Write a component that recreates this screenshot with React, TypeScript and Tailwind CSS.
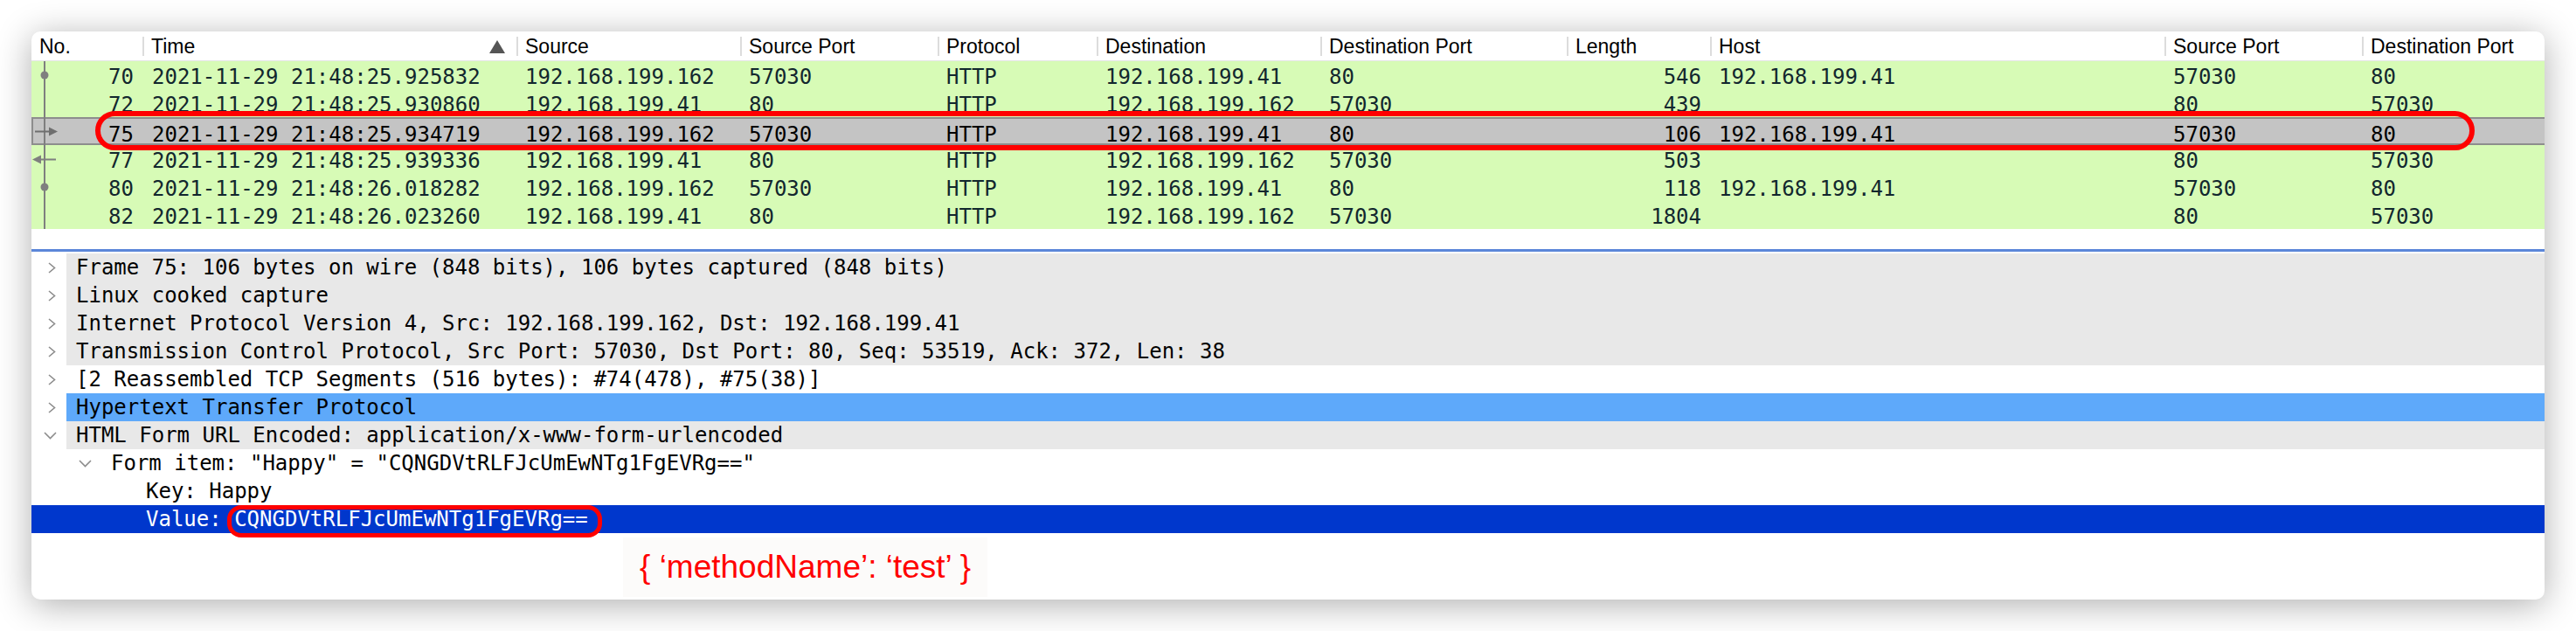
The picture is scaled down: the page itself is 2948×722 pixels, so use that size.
import React from "react";

type Row = {
  no: string;
  time: string;
  src: string;
  sport: string;
  dst: string;
  dport: string;
  len: string;
  host: string;
  sport2: string;
  dport2: string;
  sel?: boolean;
};

const rows: Row[] = [
  { no: "70", time: "2021-11-29 21:48:25.925832", src: "192.168.199.162", sport: "57030", dst: "192.168.199.41", dport: "80", len: "546", host: "192.168.199.41", sport2: "57030", dport2: "80" },
  { no: "72", time: "2021-11-29 21:48:25.930860", src: "192.168.199.41", sport: "80", dst: "192.168.199.162", dport: "57030", len: "439", host: "", sport2: "80", dport2: "57030" },
  { no: "75", time: "2021-11-29 21:48:25.934719", src: "192.168.199.162", sport: "57030", dst: "192.168.199.41", dport: "80", len: "106", host: "192.168.199.41", sport2: "57030", dport2: "80", sel: true },
  { no: "77", time: "2021-11-29 21:48:25.939336", src: "192.168.199.41", sport: "80", dst: "192.168.199.162", dport: "57030", len: "503", host: "", sport2: "80", dport2: "57030" },
  { no: "80", time: "2021-11-29 21:48:26.018282", src: "192.168.199.162", sport: "57030", dst: "192.168.199.41", dport: "80", len: "118", host: "192.168.199.41", sport2: "57030", dport2: "80" },
  { no: "82", time: "2021-11-29 21:48:26.023260", src: "192.168.199.41", sport: "80", dst: "192.168.199.162", dport: "57030", len: "1804", host: "", sport2: "80", dport2: "57030" },
];

const GRID =
  "grid grid-cols-[127px_428px_256px_226px_182px_256px_282px_164px_520px_226px_209px]";

function HeaderCell({ label, sep = true, sort = false }: { label: string; sep?: boolean; sort?: boolean }) {
  return (
    <div className="flex items-center h-full">
      {sep ? <span className="w-[2px] h-[22px] bg-[#dcdcdc] shrink-0" /> : null}
      <span className={sep ? "ml-[8px]" : "ml-[9px]"}>{label}</span>
      {sort ? (
        <svg className="ml-auto mr-[13px]" width="18" height="15" viewBox="0 0 18 15">
          <polygon points="9,0 18,15 0,15" fill="#555555" />
        </svg>
      ) : null}
    </div>
  );
}

function Chevron({ open }: { open?: boolean }) {
  if (open) {
    return (
      <svg width="15" height="9" viewBox="0 0 15 9" className="shrink-0">
        <polyline points="1,1 7.5,7.5 14,1" fill="none" stroke="#8c8c8c" strokeWidth="1.6" />
      </svg>
    );
  }
  return (
    <svg width="9" height="13" viewBox="0 0 9 13" className="shrink-0">
      <polyline points="1,1 7.5,6.5 1,12" fill="none" stroke="#8c8c8c" strokeWidth="1.6" />
    </svg>
  );
}

function DetailRow({
  text,
  bg = "",
  chevron,
  level = 0,
}: {
  text: string;
  bg?: string;
  chevron?: "closed" | "open";
  level?: number;
}) {
  return (
    <div className="flex h-[32px]">
      <div className="w-[40px] h-full flex items-center">
        {level === 0 && chevron === "closed" ? (
          <span className="ml-[19px] flex"><Chevron /></span>
        ) : null}
        {level === 0 && chevron === "open" ? (
          <span className="ml-[14px] flex"><Chevron open /></span>
        ) : null}
      </div>
      <div className={"flex-1 h-full flex items-center pl-[11px] " + bg}>
        {level === 1 ? (
          <span className="w-[40px] flex items-center shrink-0">
            {chevron === "open" ? <span className="ml-[3px] flex"><Chevron open /></span> : null}
          </span>
        ) : null}
        {level === 2 ? <span className="w-[80px] shrink-0" /> : null}
        <span className="whitespace-pre">{text}</span>
      </div>
    </div>
  );
}

export default function App() {
  return (
    <div className="w-[2948px] h-[722px] bg-white p-[36px]">
      <div className="w-[2876px] h-[650px] rounded-[10px] bg-white shadow-[0_6px_40px_rgba(0,0,0,0.32)] overflow-hidden flex flex-col">
        {/* Header */}
        <div className={GRID + " h-[34px] border-b border-[#e6e6e6] text-[23px] text-black font-['Liberation_Sans',Arial,sans-serif]"}>
          <HeaderCell label="No." sep={false} />
          <HeaderCell label="Time" sort />
          <HeaderCell label="Source" />
          <HeaderCell label="Source Port" />
          <HeaderCell label="Protocol" />
          <HeaderCell label="Destination" />
          <HeaderCell label="Destination Port" />
          <HeaderCell label="Length" />
          <HeaderCell label="Host" />
          <HeaderCell label="Source Port" />
          <HeaderCell label="Destination Port" />
        </div>

        {/* Packet list */}
        <div className="relative font-['DejaVu_Sans_Mono',monospace] text-[24px]">
          {rows.map((r) => (
            <div
              key={r.no}
              className={
                GRID +
                " h-[32px] items-center " +
                (r.sel
                  ? "bg-[#c4c4c4] border-y-2 border-[#8d8d8d] shadow-[inset_2px_0_0_#8d8d8d] text-black"
                  : "bg-[#d7fbb6] text-[#12272e]")
              }
            >
              <div className="text-right pr-[10px]">{r.no}</div>
              <div className="pl-[11px] whitespace-pre">{r.time}</div>
              <div className="pl-[10px]">{r.src}</div>
              <div className="pl-[10px]">{r.sport}</div>
              <div className="pl-[10px]">HTTP</div>
              <div className="pl-[10px]">{r.dst}</div>
              <div className="pl-[10px]">{r.dport}</div>
              <div className="text-right pr-[10px]">{r.len}</div>
              <div className="pl-[10px]">{r.host}</div>
              <div className="pl-[10px]">{r.sport2}</div>
              <div className="pl-[10px]">{r.dport2}</div>
            </div>
          ))}
          {/* conversation graph */}
          <svg className="absolute left-0 top-0" width="40" height="192" viewBox="0 0 40 192">
            <line x1="15" y1="0" x2="15" y2="192" stroke="#7f7f7f" strokeWidth="2" />
            <circle cx="15" cy="16" r="4.5" fill="#7f7f7f" />
            <circle cx="15" cy="144" r="4.5" fill="#7f7f7f" />
            <line x1="4" y1="80.5" x2="24" y2="80.5" stroke="#6f6f6f" strokeWidth="2" />
            <polygon points="20,75.5 30,80.5 20,85.5" fill="#6f6f6f" />
            <line x1="8" y1="112.5" x2="28" y2="112.5" stroke="#7f7f7f" strokeWidth="2" />
            <polygon points="11,107.5 1,112.5 11,117.5" fill="#7f7f7f" />
          </svg>
          {/* red annotation around selected row */}
          <div className="absolute left-[73px] top-[57px] w-[2723px] h-[45px] border-[6px] border-[#ff0000] rounded-[23px]" />
        </div>

        <div className="h-[23px]" />
        <div className="h-[3px] bg-[#5b86d9]" />
        <div className="h-[2px]" />

        {/* Packet details */}
        <div className="font-['DejaVu_Sans_Mono',monospace] text-[24px] text-black">
          <DetailRow chevron="closed" bg="bg-[#e8e8e8]" text="Frame 75: 106 bytes on wire (848 bits), 106 bytes captured (848 bits)" />
          <DetailRow chevron="closed" bg="bg-[#e8e8e8]" text="Linux cooked capture" />
          <DetailRow chevron="closed" bg="bg-[#e8e8e8]" text="Internet Protocol Version 4, Src: 192.168.199.162, Dst: 192.168.199.41" />
          <DetailRow chevron="closed" bg="bg-[#e8e8e8]" text="Transmission Control Protocol, Src Port: 57030, Dst Port: 80, Seq: 53519, Ack: 372, Len: 38" />
          <DetailRow chevron="closed" text="[2 Reassembled TCP Segments (516 bytes): #74(478), #75(38)]" />
          <DetailRow chevron="closed" bg="bg-[#5ea9fa]" text="Hypertext Transfer Protocol" />
          <DetailRow chevron="open" bg="bg-[#e8e8e8]" text="HTML Form URL Encoded: application/x-www-form-urlencoded" />
          <DetailRow chevron="open" level={1} text={'Form item: "Happy" = "CQNGDVtRLFJcUmEwNTg1FgEVRg=="'} />
          <DetailRow level={2} text="Key: Happy" />
          <div className="relative flex h-[32px] items-center bg-[#0037cc] text-white">
            <span className="pl-[131px] whitespace-pre">Value: CQNGDVtRLFJcUmEwNTg1FgEVRg==</span>
            <div className="absolute left-[224px] top-0 w-[429px] h-[37px] border-[5px] border-[#ff0000] rounded-[16px]" />
          </div>
        </div>

        {/* annotation */}
        <div className="pl-[677px] pt-[5px]">
          <div className="w-[417px] h-[68px] bg-[#fcfbfa] flex items-center pl-[19px] text-[37px] text-[#ff0000] font-['Liberation_Sans',Arial,sans-serif] whitespace-pre">
            {"{ \u2018methodName\u2019: \u2018test\u2019 }"}
          </div>
        </div>
      </div>
    </div>
  );
}
